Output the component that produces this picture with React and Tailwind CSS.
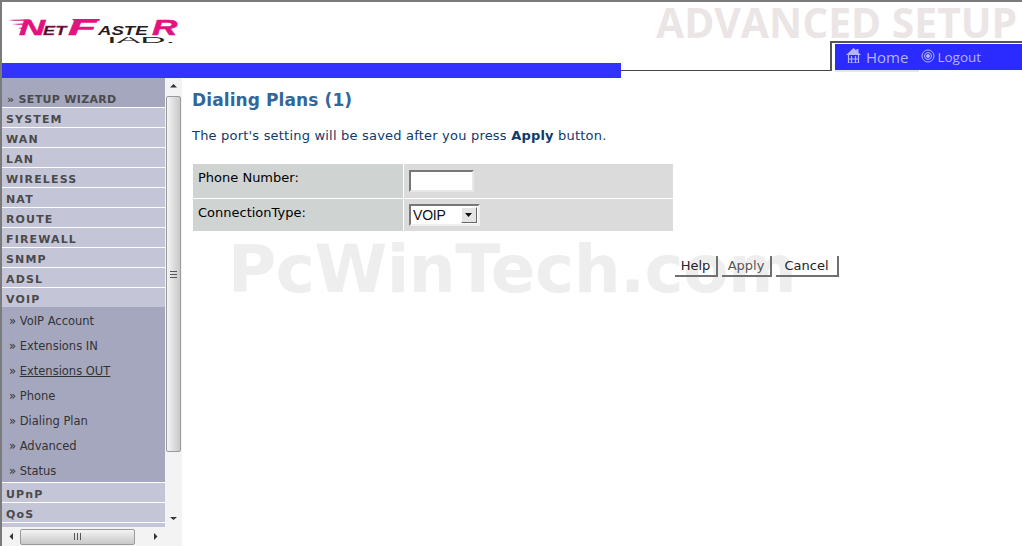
import React from "react";

const top = ["SYSTEM", "WAN", "LAN", "WIRELESS", "NAT", "ROUTE", "FIREWALL", "SNMP", "ADSL", "VOIP"];
const sub = ["VoIP Account", "Extensions IN", "Extensions OUT", "Phone", "Dialing Plan", "Advanced", "Status"];

function MenuRow({ label }) {
  return (
    <div className="h-5 shrink-0 border-b border-white bg-[#c5c5d8] pl-1 pt-[3px] text-[11px] font-bold leading-[17px] tracking-[1.15px] text-[#4a4a4a]">
      {label}
    </div>
  );
}

function Logo() {
  const pink = "#e3127f";
  const dark = "#2a1a22";
  return (
    <svg className="ml-[6px] mt-[15px] block" width="176" height="30" viewBox="0 0 176 30" fontFamily="'Liberation Sans', sans-serif" fontWeight="700" fontStyle="italic">
      <path d="M0 3 L22 2 L20 4 L6 4z M4 7 L20 6 L19 8 L10 8z M10 11 L18 10 L17 12 L13 12z" fill={pink} opacity="0.75" />
      <path d="M64 2 H92 L91 4 H66z" fill={pink} />
      <text transform="translate(11,18) scale(1.65,1)" fontSize="22" fill={pink} stroke={pink} strokeWidth="0.5">N</text>
      <text transform="translate(35,18) scale(1.4,1)" fontSize="13" fill={dark} stroke={pink} strokeWidth="0.3">ET</text>
      <text transform="translate(60,18) scale(2.1,1)" fontSize="22" fill={pink} stroke={pink} strokeWidth="0.5">F</text>
      <text transform="translate(90,18) scale(1.55,1)" fontSize="12" fill={dark}>ASTE</text>
      <text transform="translate(144,18) scale(1.6,1)" fontSize="22" fill={pink} stroke={pink} strokeWidth="0.5">R</text>
      <text transform="translate(99,26) scale(3.9,1)" fontSize="9" fontWeight="400" fontStyle="normal" fill="#222">IAD.</text>
    </svg>
  );
}

function VScroll() {
  return (
    <div className="flex w-[17px] shrink-0 flex-col items-center bg-[#f3f3f3]">
      <svg width="17" height="18" viewBox="0 0 17 18"><path d="M5 9.500h7L8.500 6z" fill="#333" /></svg>
      <div className="flex h-[356px] w-[15px] items-center justify-center rounded-[2px] border border-[#9a9a9a] bg-gradient-to-r from-[#f4f4f4] to-[#c8c8c8]">
        <svg width="7" height="7" viewBox="0 0 7 7"><path d="M0 .5h7M0 3.500h7M0 6.500h7" stroke="#555" /></svg>
      </div>
      <div className="flex-1" />
      <svg width="17" height="16" viewBox="0 0 17 16"><path d="M5 6h7l-3.500 3z" fill="#333" /></svg>
    </div>
  );
}

export default function App() {
  return (
    <div className="relative flex h-[546px] w-[1022px] flex-col overflow-hidden border-l-2 border-t-2 border-[#7b7b7b] bg-white font-['DejaVu_Sans',Verdana,sans-serif]">
      <header className="flex h-[76px] shrink-0">
        <div className="flex w-[619px] shrink-0 flex-col justify-between">
          <Logo />
          <div className="h-[15px] bg-[#3333ff]" />
        </div>
        <div className="relative flex-1">
          <div className="absolute left-[35px] top-[-2px] whitespace-nowrap font-['Open_Sans',sans-serif] text-[40.8px] font-bold leading-[44px] text-[#ebe5e5]">ADVANCED SETUP</div>
          <div className="absolute left-0 right-[192px] top-[68px] h-px bg-[#444]" />
          <div className="absolute left-[209px] right-0 top-[39px] h-[30px] border-l-2 border-t-2 border-[#555] pl-[3px] pt-[1px]">
            <div className="flex h-[26px] items-center bg-[#2b2bff] font-['Open_Sans',sans-serif] text-[#b4b4ff]">
              <svg className="ml-[11px] -mt-[3px]" width="15" height="15" viewBox="0 0 15 15" fill="none" stroke="#b4b4ff" strokeWidth="1.2">
                <path d="M0 7 7.500 0l3 2.500V1h2v3.500L15 7z" fill="#b4b4ff" stroke="none" />
                <path d="M2.500 7v8h10V7M5.500 8v7M9.500 8v7M2.500 11h10" />
              </svg>
              <span className="ml-[5px] -mt-[1px] text-[15px] leading-[20px]">Home</span>
              <svg className="ml-[13px] -mt-[2px]" width="14" height="14" viewBox="0 0 14 14" fill="none" stroke="#b4b4ff">
                <circle cx="7" cy="7" r="6" /><circle cx="7" cy="7" r="3.500" /><circle cx="7" cy="7" r="1.500" fill="#b4b4ff" />
              </svg>
              <span className="ml-[2px] -mt-[1px] text-[13.5px] leading-[20px]">Logout</span>
            </div>
            <div className="h-[2px] w-[84px] bg-[#e9e5e5]" />
          </div>
        </div>
      </header>

      <div className="flex min-h-0 flex-1">
        <aside className="flex w-[180px] shrink-0 flex-col">
          <div className="flex min-h-0 flex-1">
            <nav className="flex w-[163px] shrink-0 flex-col overflow-hidden">
              <div className="h-[30px] shrink-0 border-b border-white bg-[#a5a7bf] pl-[5px] pt-[14px] text-[11px] font-bold leading-[15px] tracking-[0.32px] text-[#4a4a4a]">» SETUP WIZARD</div>
              {top.map((t) => <MenuRow key={t} label={t} />)}
              <div className="-mt-px flex shrink-0 flex-col border-b border-white bg-[#a5a7bf]">
                {sub.map((s) => (
                  <div key={s} className="h-[25px] whitespace-nowrap pl-[7px] text-[11.5px] leading-[28px] text-[#333]">
                    » <span className={s === "Extensions OUT" ? "underline" : ""}>{s}</span>
                  </div>
                ))}
              </div>
              <MenuRow label="UPnP" />
              <MenuRow label="QoS" />
              <div className="flex-1 bg-[#c5c5d8]" />
            </nav>
            <VScroll />
          </div>
          <div className="flex h-[19px] shrink-0 items-center bg-[#f3f3f3]">
            <svg width="18" height="17" viewBox="0 0 18 17"><path d="M11 5v7L7.500 8.500z" fill="#333" /></svg>
            <div className="flex h-[16px] w-[115px] items-center justify-center rounded-[2px] border border-[#9a9a9a] bg-gradient-to-b from-[#f4f4f4] to-[#c8c8c8]">
              <svg width="7" height="7" viewBox="0 0 7 7"><path d="M.5 0v7M3.500 0v7M6.500 0v7" stroke="#555" /></svg>
            </div>
            <svg className="ml-[12px]" width="18" height="17" viewBox="0 0 18 17"><path d="M7 5v7l3.500-3.500z" fill="#333" /></svg>
            <div className="flex-1" />
          </div>
        </aside>

        <main className="relative flex-1 pl-[10px] pt-[12px]">
          <h1 className="text-[17px] font-bold leading-[20px] tracking-[0.1px] text-[#336699]">Dialing Plans (1)</h1>
          <p className="mt-[17px] text-[13px] leading-[18px] tracking-[0.2px] text-[#0f3a6b]">
            The port's setting will be saved after you press <b>Apply</b> button.
          </p>
          <div className="ml-px mt-[19px] w-[480px] text-[13px] text-black">
            <div className="flex h-[35px] border-b border-white">
              <div className="w-[210px] bg-[#cfd3d2] pl-[5px] pt-[5px] leading-[18px]">Phone Number:</div>
              <div className="flex-1 border-l border-white bg-[#dbdbdb] pl-[5px] pt-[6px]">
                <input className="block h-[22px] w-[65px] border-2 border-b-[#e8e8e8] border-l-[#777] border-r-[#e8e8e8] border-t-[#777] bg-white" />
              </div>
            </div>
            <div className="flex h-[32px]">
              <div className="w-[210px] bg-[#cfd3d2] pl-[5px] pt-[5px] leading-[18px]">ConnectionType:</div>
              <div className="flex-1 border-l border-white bg-[#dbdbdb] pl-[5px] pt-[5px]">
                <div className="flex h-[22px] w-[71px] items-center justify-between border-2 border-b-[#efefef] border-l-[#777] border-r-[#efefef] border-t-[#777] bg-white pl-[2px] pr-[1px] font-['Liberation_Sans',sans-serif] text-[14px] tracking-[-0.2px] text-[#111]">
                  VOIP
                  <span className="flex h-[16px] w-[16px] items-center justify-center border border-b-[#666] border-l-white border-r-[#666] border-t-white bg-[#e4e4e4]">
                    <svg width="8" height="5" viewBox="0 0 8 5"><path d="M0 0h7L3.500 4z" fill="#111" /></svg>
                  </span>
                </div>
              </div>
            </div>
          </div>
          <div className="mt-[25px] flex w-[647px] justify-end gap-[4px] text-[13px] leading-[20px] text-[#222]">
            {[["Help", "w-[43px]"], ["Apply", "w-[50px] text-[#555]"], ["Cancel", "w-[63px]"]].map(([t, c]) => (
              <div key={t} className={`relative z-10 flex h-[21px] items-center justify-center border-b-2 border-r-2 border-b-[#707070] border-r-[#707070] ${c}`}>{t}</div>
            ))}
          </div>
          <div className="pointer-events-none absolute left-[46px] top-[157px] whitespace-nowrap text-[66px] font-bold leading-[70px] tracking-[-0.55px] text-[#eeeeee]">PcWinTech.com</div>
        </main>
      </div>
    </div>
  );
}
